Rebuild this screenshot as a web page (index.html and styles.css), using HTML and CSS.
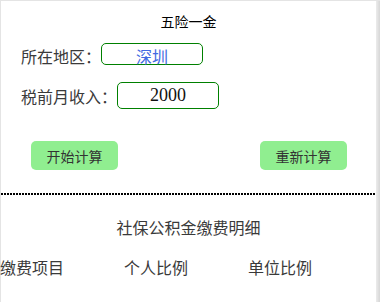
FILE: index.html
```html
<!DOCTYPE html>
<html lang="zh">
<head>
<meta charset="utf-8">
<title>五险一金</title>
<link rel="stylesheet" href="styles.css">
</head>
<body>
<div class="frame">
  <div class="page">
    <h1 class="title">五险一金</h1>
    <div class="row row-city">
      <span class="label">所在地区：</span>
      <div class="field field-city">深圳</div>
    </div>
    <div class="row row-income">
      <span class="label">税前月收入：</span>
      <div class="field field-income">2000</div>
    </div>
    <div class="actions">
      <button class="btn">开始计算</button>
      <button class="btn">重新计算</button>
    </div>
    <div class="divider"></div>
    <h2 class="section-title">社保公积金缴费明细</h2>
    <div class="table-head">
      <span>缴费项目</span>
      <span>个人比例</span>
      <span>单位比例</span>
    </div>
  </div>
  <div class="scrollbar"></div>
</div>
</body>
</html>
```
FILE: styles.css
```css
html, body {
  margin: 0;
  padding: 0;
  background: #ffffff;
}
body {
  font-family: "Noto Sans CJK SC", "Noto Sans", sans-serif;
  color: #333333;
}
.frame {
  display: flex;
  width: 380px;
  height: 302px;
  overflow: hidden;
  border-top: 1px solid #e4e4e4;
  box-sizing: border-box;
}
.page {
  width: 375px;
  border-left: 1px solid #e4e4e4;
  background: #ffffff;
}
.scrollbar {
  width: 4px;
  background: linear-gradient(to right, #ececec, #d6d6d6);
}
.title {
  margin: 0;
  padding-top: 10px;
  font-size: 14px;
  font-weight: normal;
  line-height: 20px;
  text-align: center;
  color: #000000;
}
.row {
  display: flex;
  padding-left: 20px;
}
.row-city {
  align-items: baseline;
  margin-top: 12px;
}
.row-income {
  align-items: center;
  margin-top: 15px;
}
.label {
  font-size: 16px;
  line-height: 22px;
  color: #3a3a3a;
}
.field {
  box-sizing: border-box;
  width: 102px;
  border: 1px solid #008000;
  border-radius: 5px;
  text-align: center;
}
.field-city {
  height: 22px;
  font-size: 16px;
  line-height: 20px;
  padding-top: 2px;
  color: #4169e1;
}
.field-income {
  height: 27px;
  font-family: "Liberation Serif", serif;
  font-size: 18px;
  line-height: 25px;
  color: #111111;
}
.actions {
  display: flex;
  justify-content: space-between;
  padding: 0 29px 0 30px;
  margin-top: 32px;
}
.btn {
  width: 87px;
  height: 29px;
  border: none;
  border-radius: 5px;
  background: #90ee90;
  font-family: "Noto Sans CJK SC", sans-serif;
  font-size: 14px;
  color: #333333;
  padding: 0;
}
.divider {
  height: 2px;
  margin-top: 23px;
  background: repeating-linear-gradient(to right, #000000 0, #000000 2px, #ffffff 2px, #ffffff 3px);
}
.section-title {
  margin: 0;
  margin-top: 21px;
  font-size: 16px;
  font-weight: normal;
  line-height: 22px;
  text-align: center;
  color: #3a3a3a;
}
.table-head {
  display: grid;
  grid-template-columns: 124px 124px 124px;
  margin-top: 18px;
  margin-left: -1px;
  font-size: 16px;
  line-height: 22px;
  color: #3a3a3a;
}
```
